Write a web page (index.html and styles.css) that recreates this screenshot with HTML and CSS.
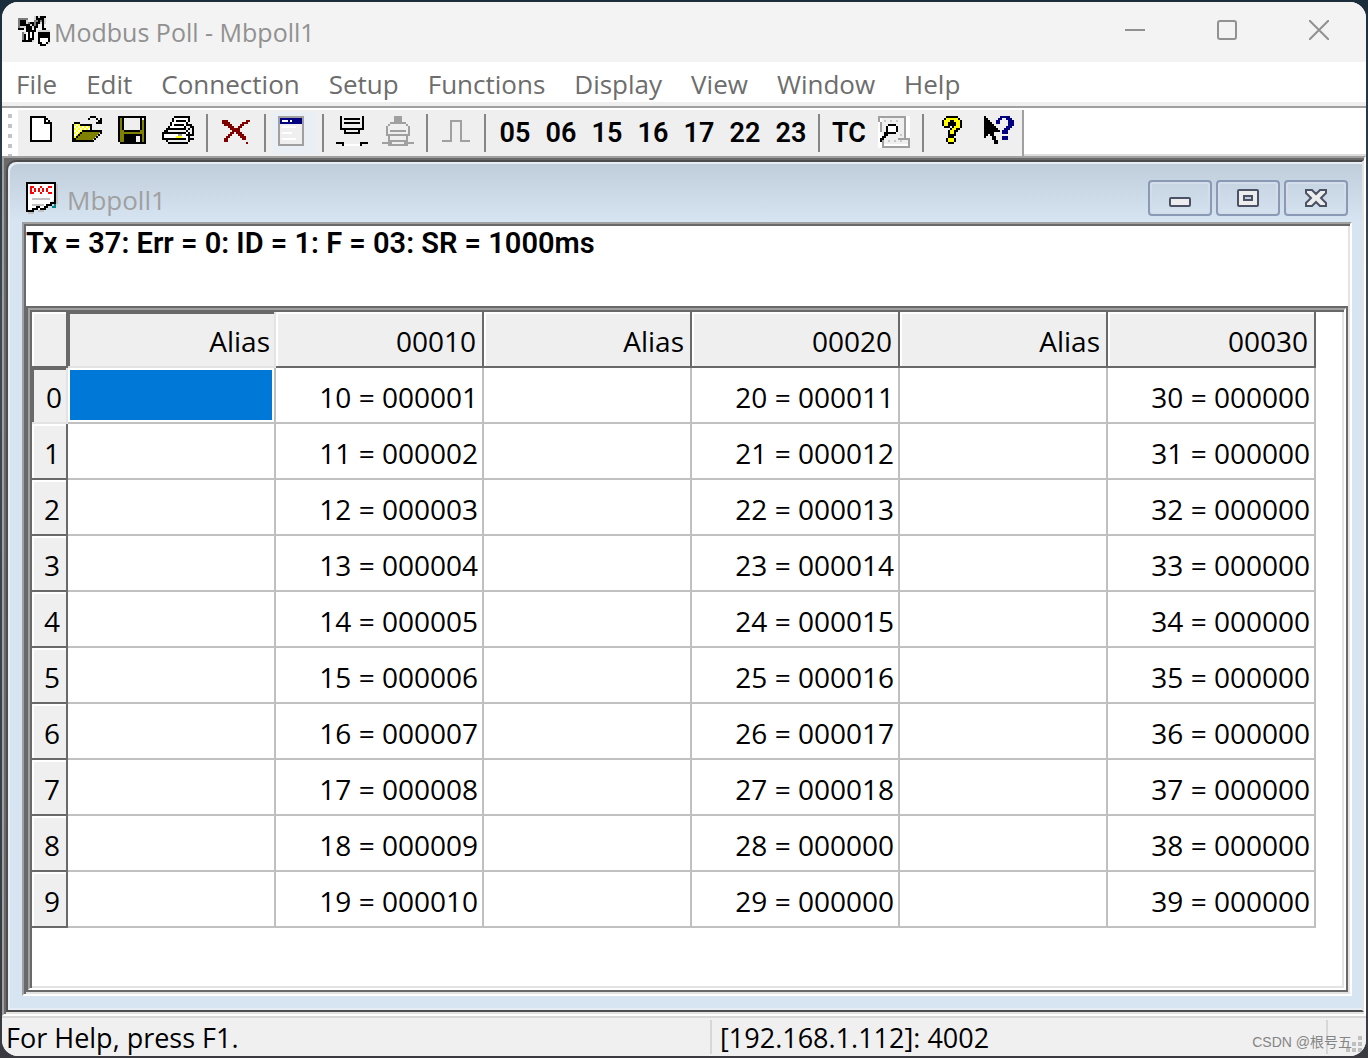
FILE: index.html
```html
<!DOCTYPE html>
<html lang="en">
<head>
<meta charset="utf-8">
<title>Modbus Poll - Mbpoll1</title>
<link rel="stylesheet" href="styles.css">
</head>
<body>
<div class="app">
  <header class="titlebar">
    <svg class="app-icon" viewBox="0 0 16 16" aria-hidden="true">
      <path class="soft" d="M0 1H5V6H0ZM5 3H8V6H5ZM8 0H14V4H8ZM2 8H8V13H2ZM10 7H16V14H10Z"/>
      <path class="mid" d="M0 1H5V2H0ZM0 2H1V6H0ZM5 3H7V4H5ZM8 2H10V5H8ZM10 1H12V3H10ZM8 5H9V8H8ZM2 8H3V12H2Z"/>
      <path class="k" d="M1 2H4V5H1ZM0 6H3V7H0ZM4 4H6V5H7V7H8V12H7V13H2V12H3V9H4ZM6 3H8V5H7V4H6ZM9 0H10V2H9ZM11 0H14V1H13V6H14V7H12V2H11V4H10V6H9V8H8V5H9V3H10V1H11ZM10 8H16V13H15V14H14V15H11V14H10Z"/>
      <path class="w" d="M4 8H5V12H4ZM6 8H7V11H6ZM11 11H15V13H14V14H12V13H11Z"/>
    </svg>
    <h1 class="app-title">Modbus Poll - Mbpoll1</h1>
    <div class="caption-buttons">
      <button type="button" aria-label="Minimize"><svg viewBox="0 0 20 20"><path d="M0 10H20"/></svg></button>
      <button type="button" aria-label="Maximize"><svg viewBox="0 0 20 20"><rect x="1" y="1" width="18" height="18" rx="2"/></svg></button>
      <button type="button" aria-label="Close"><svg viewBox="0 0 20 20"><path d="M0 0L20 20M20 0L0 20"/></svg></button>
    </div>
  </header>

  <nav class="menu" aria-label="Main menu">
    <button type="button">File</button>
    <button type="button">Edit</button>
    <button type="button">Connection</button>
    <button type="button">Setup</button>
    <button type="button">Functions</button>
    <button type="button">Display</button>
    <button type="button">View</button>
    <button type="button">Window</button>
    <button type="button">Help</button>
  </nav>

  <div class="rebar">
    <div class="grip"></div>
    <div class="toolbar" role="toolbar" aria-label="Standard">
      <button type="button" aria-label="New"><svg viewBox="0 0 16 16"><path class="w" d="M2.5 .5H9.5L12.5 3.5V12.5H2.5Z"/><path class="ln" d="M2 .5H10M2.5 0V13M2 12.5H13M12.5 3V13M9.5 0V4M9 3.5H13M10 1.5H11M11 2.5H12"/></svg></button>
      <button type="button" aria-label="Open"><svg viewBox="0 0 16 16">
        <path fill="#fff" d="M1 4H10V7H4L1 12Z"/>
        <path stroke="#ff0" stroke-dasharray="1 1" d="M1 4.5H4M2 5.5H10M1 6.5H10M2 7.5H5M1 8.5H4M2 9.5H3M1 10.5H2"/>
        <path fill="#808000" d="M5 8H14L10 12H1L3 9Z"/>
        <path class="ln" d="M8 1.5H9M9 .5H12M12 1.5H13M13 2.5H15M12 3.5H15M14.5 1V4M1 3.5H4M.5 4V13M4 4.5H10M9.5 4V8M5 7.5H15M4 8.5H5M3 9.5H4M2 10.5H3M1 11.5H2M1 12.5H11M11 11.5H12M12 10.5H13M13 9.5H14M14 8.5H15"/></svg></button>
      <button type="button" aria-label="Save"><svg viewBox="0 0 16 16">
        <path class="k" d="M0 0H14V14H1V13H0Z"/><path fill="#808000" d="M1 1H13V13H1Z"/>
        <path class="k" d="M2 0H12V7H11V8H3V7H2ZM3 9H12V14H3Z"/><path fill="#efefef" d="M3 1H11V7H3ZM9 10H11V13H9ZM12 1H13V2H12Z"/></svg></button>
      <button type="button" aria-label="Print"><svg viewBox="0 0 16 16">
        <path class="w" d="M5 1H12L10 7H2ZM0 8H13V12H0Z"/>
        <path class="ln" d="M5 .5H13M4.500 1V3M3.500 3V5M2.500 5V7M12.500 1V3M11.500 3V5M10.500 5V7M6 2.500H11M5 4.500H10M1 6.500H10M0 7.500H2M-.5 8V12M0 8.500H11M11 7.500H12M12 6.500H13M13 5.500H15M12 4.500H14M14.500 5V10M12.500 8V13M0 11.500H11M1 12.500H2M2 13.500H12M11 9.500H14M13 11.500H15M12 12.500H13"/>
        <path fill="#ff0" d="M6 10H9V11H6Z"/><path fill="#999" d="M7 9H9V10H7Z"/></svg></button>
      <span class="sep"></span>
      <button type="button" aria-label="Delete"><svg viewBox="0 0 16 16"><path fill="#800000" d="M0 2H3V3H4V4H5V5H6V6H8V5H9V4H10V3H12V2H14V3H13V4H11V5H10V6H9V8H10V9H11V10H12V12H10V11H9V10H8V9H7V8H6V9H5V10H4V11H3V13H1V11H2V10H3V9H4V8H5V7H4V6H3V5H1V4H0ZM12 13H13V14H12Z"/></svg></button>
      <span class="sep"></span>
      <button type="button" class="hot" aria-label="Read/write definition"><svg viewBox="0 0 16 16">
        <path fill="#a0a0a0" d="M-1 0H12V15H-1Z"/><path fill="#efefef" d="M0 1H11V14H0Z"/><path fill="#000080" d="M0 1H11V4H0Z"/>
        <path class="w" d="M1 2H4V3H1ZM5 2H6V3H5ZM1 5H8V6H1ZM1 8H6V9H1ZM1 11H8V12H1Z"/></svg></button>
      <span class="sep"></span>
      <button type="button" aria-label="Connect"><svg viewBox="0 0 16 16"><path class="w" d="M3 14H11V15H3Z"/><path class="ln" d="M1.500 0V6M12.500 0V6M3 1.500H11M3 3.500H11M1 6.500H13M3.500 7V9M10.500 7V9M3 8.500H11M-1 13.500H3M2.500 13V15M11 13.500H15M11.500 13V15"/></svg></button>
      <button type="button" aria-label="Disconnect"><svg viewBox="0 0 16 16"><path fill="#a0a0a0" d="M5 0H9V3H11V4H12V5H13V10H12V13H15V14H12V15H2V14H-1V13H2V10H1V5H2V4H3V3H5Z"/><path fill="#efefef" d="M3 4H11V5H12V9H11V12H10V13H4V12H3V9H2V5H3Z"/><path fill="#a0a0a0" d="M3 7H11V8H3ZM3 9H11V10H3ZM3 12H11V13H3Z"/><path fill="#efefef" d="M4 13H10V14H4Z"/></svg></button>
      <span class="sep"></span>
      <button type="button" aria-label="Pulse"><svg viewBox="0 0 16 16"><path fill="none" stroke="#a0a0a0" d="M0 12.500H4.500V2.500H9.500V12.500H14"/></svg></button>
      <span class="sep"></span>
      <button type="button" class="num">05</button>
      <button type="button" class="num">06</button>
      <button type="button" class="num">15</button>
      <button type="button" class="num">16</button>
      <button type="button" class="num">17</button>
      <button type="button" class="num">22</button>
      <button type="button" class="num">23</button>
      <span class="sep"></span>
      <button type="button" class="num">TC</button>
      <button type="button" aria-label="Communication traffic"><svg viewBox="0 0 16 16">
        <path class="w" d="M-1 0H15V16H-1Z"/><path fill="#efefef" d="M1 1H12V11H14V14H2V12H1Z"/>
        <path fill="none" stroke="#a0a0a0" d="M-1 .5H13M-.5 0V3M.5 3V8M12.500 0V12M9 11.500H15M14.500 11V15M1 15.500H15M1.500 12V16"/>
        <path fill="none" stroke="#c8c8c8" stroke-dasharray="1 2" d="M2 2.500H11M10 9.500H12M4 12.500H12"/>
        <path class="k" d="M4 4H8V5H4ZM3 5H4V8H3ZM8 5H9V8H8ZM4 8H8V9H4ZM2 8H4V10H3V11H2V12H1V13H0V11H1V10H2Z"/><path class="w" d="M4 5H8V8H4Z"/></svg></button>
      <span class="sep"></span>
      <button type="button" aria-label="About"><svg viewBox="0 0 16 16">
        <path class="k" d="M4 0H10V1H11V2H12V6H11V7H10V8H9V10H8V11H9V13H8V14H5V13H4V11H5V7H6V6H7V5H6V6H3V5H2V2H3V1H4Z"/>
        <path fill="#ff0" d="M4 1H10V2H11V6H9V7H8V9H6V7H7V6H8V5H9V3H8V2H6V3H5V5H3V2H4ZM5 11H8V13H5Z"/></svg></button>
      <button type="button" aria-label="Context help"><svg viewBox="0 0 16 16">
        <path class="k" d="M0 0H1V1H2V2H3V3H4V4H5V5H6V6H7V7H8V8H5V10H6V12H7V14H5V12H4V10H3V9H2V10H1V11H0Z"/>
        <path fill="#000080" d="M8 0H13V1H14V2H15V5H14V6H13V7H12V9H9V7H10V6H11V5H12V2H11V1H9V2H8V4H6V2H7V1H8ZM9 10H12V12H9Z"/></svg></button>
    </div>
    <div class="rebar-rest"></div>
  </div>

  <main class="mdi">
    <section class="child">
      <header class="child-title">
        <svg class="doc-icon" viewBox="0 0 16 16" aria-hidden="true">
          <path fill="#c0c0c0" d="M15 1H16V11H15ZM1 15H4V16H1ZM6 14H9V15H6Z"/>
          <path class="w" d="M1 1H14V9L8 14H1Z"/>
          <path class="ln" d="M0 .5H15M.5 0V15M14.500 0V10M13 10.500H15M12.500 10V12M10 11.500H13M10.500 11V13M9 12.500H11M7 13.500H10M5 12.500H7M4 13.500H6M1 14.500H4M3 13.500H5"/>
          <path fill="#f00" d="M2 2H4V3H5V5H4V6H2ZM7 2H8V3H9V5H8V6H7V5H6V3H7ZM11 2H13V3H11V5H13V6H11V5H10V3H11Z"/>
          <path class="w" d="M3 3H4V5H3ZM7 3H8V5H7Z"/>
          <path fill="#c0c0c0" d="M3 8H12V9H3ZM3 11H9V12H3Z"/><path fill="#008080" d="M14 11H15V13H13V12H14Z"/>
        </svg>
        <h2>Mbpoll1</h2>
        <div class="child-buttons">
          <button type="button" aria-label="Minimize document"><svg viewBox="0 0 24 20"><rect class="gl" x="2" y="10" width="20" height="8" rx="1"/></svg></button>
          <button type="button" aria-label="Restore document"><svg viewBox="0 0 24 20"><rect class="gl" x="2" y="2" width="20" height="16" rx="1"/><rect class="gl hole" x="8" y="8" width="8" height="4"/></svg></button>
          <button type="button" aria-label="Close document"><svg viewBox="0 0 24 20"><path class="gl" d="M2 2H8L12 6L16 2H22V5L17 10L22 15V18H16L12 14L8 18H2V15L7 10L2 5Z"/></svg></button>
        </div>
      </header>
      <div class="client">
        <p class="poll-status">Tx = 37: Err = 0: ID = 1: F = 03: SR = 1000ms</p>
        <div class="grid-frame"><div class="grid-inner">
          <table class="grid">
            <thead>
              <tr><th class="corner"></th><th class="active" scope="col">Alias</th><th scope="col">00010</th><th scope="col">Alias</th><th scope="col">00020</th><th scope="col">Alias</th><th scope="col">00030</th></tr>
            </thead>
            <tbody>
              <tr><th class="active" scope="row">0</th><td class="selected"></td><td>10 = 000001</td><td></td><td>20 = 000011</td><td></td><td>30 = 000000</td></tr>
              <tr><th scope="row">1</th><td></td><td>11 = 000002</td><td></td><td>21 = 000012</td><td></td><td>31 = 000000</td></tr>
              <tr><th scope="row">2</th><td></td><td>12 = 000003</td><td></td><td>22 = 000013</td><td></td><td>32 = 000000</td></tr>
              <tr><th scope="row">3</th><td></td><td>13 = 000004</td><td></td><td>23 = 000014</td><td></td><td>33 = 000000</td></tr>
              <tr><th scope="row">4</th><td></td><td>14 = 000005</td><td></td><td>24 = 000015</td><td></td><td>34 = 000000</td></tr>
              <tr><th scope="row">5</th><td></td><td>15 = 000006</td><td></td><td>25 = 000016</td><td></td><td>35 = 000000</td></tr>
              <tr><th scope="row">6</th><td></td><td>16 = 000007</td><td></td><td>26 = 000017</td><td></td><td>36 = 000000</td></tr>
              <tr><th scope="row">7</th><td></td><td>17 = 000008</td><td></td><td>27 = 000018</td><td></td><td>37 = 000000</td></tr>
              <tr><th scope="row">8</th><td></td><td>18 = 000009</td><td></td><td>28 = 000000</td><td></td><td>38 = 000000</td></tr>
              <tr><th scope="row">9</th><td></td><td>19 = 000010</td><td></td><td>29 = 000000</td><td></td><td>39 = 000000</td></tr>
            </tbody>
          </table>
        </div></div>
      </div>
    </section>
  </main>

  <footer class="statusbar">
    <span class="pane help">For Help, press F1.</span>
    <span class="pane conn">[192.168.1.112]: 4002</span>
    <span class="pane last"></span>
    <svg class="size-grip" viewBox="0 0 16 16" aria-hidden="true"><path d="M12 0h4v4h-4zM6 6h4v4H6zM12 6h4v4h-4zM0 12h4v4H0zM6 12h4v4H6zM12 12h4v4h-4z"/></svg>
    <span class="watermark">CSDN @根号五</span>
  </footer>
</div>
</body>
</html>
```
FILE: styles.css
```css
* { box-sizing: border-box; }

body {
  margin: 0;
  min-height: 100vh;
  padding: 2px;
  display: flex;
  background: linear-gradient(180deg, #1b2c3b, #3d4a55 30%, #34404b 75%, #3a3a40);
  font-family: "Open Sans", "Noto Sans", sans-serif;
  font-size: 28px;
  color: #000;
}

h1, h2, p { margin: 0; font-weight: 400; }

button {
  margin: 0;
  padding: 0;
  border: 0;
  background: none;
  font: inherit;
  color: inherit;
}

.app {
  flex: 1;
  min-width: 0;
  display: flex;
  flex-direction: column;
  border-radius: 16px;
  overflow: hidden;
  background: #f0f0f0;
}

/* Title bar */
.titlebar {
  height: 60px;
  display: flex;
  align-items: center;
  padding-left: 16px;
  background: #f3f3f3;
  color: #919191;
}
.app-icon { width: 32px; height: 32px; margin-right: 4px; }
.app-title { flex: 1; font-size: 25px; line-height: 60px; }
.caption-buttons { display: flex; padding: 0 1px 4px 0; }
.caption-buttons button { width: 92px; height: 56px; display: grid; place-items: center; }
.caption-buttons svg { width: 20px; height: 20px; fill: none; stroke: #919191; stroke-width: 2; }

/* Menu */
.menu {
  height: 44px;
  display: flex;
  gap: 29px;
  padding-left: 14px;
  background: #fff;
  border-bottom: 4px solid #efefef;
  color: #6d6d6d;
}
.menu button { font-size: 26px; line-height: 40px; padding-top: 2px; height: 40px; }

/* Toolbar */
.rebar { display: flex; height: 50px; border-top: 2px solid #a0a0a0; background: #fff; }
.grip {
  width: 16px;
  background: linear-gradient(#c4c4c4, #c4c4c4) 6px 6px / 4px 4px no-repeat,
    linear-gradient(#c4c4c4, #c4c4c4) 6px 16px / 4px 4px no-repeat,
    linear-gradient(#c4c4c4, #c4c4c4) 6px 26px / 4px 4px no-repeat,
    linear-gradient(#c4c4c4, #c4c4c4) 6px 36px / 4px 4px no-repeat,
    linear-gradient(#c4c4c4, #c4c4c4) 6px 46px / 4px 2px no-repeat;
}
.toolbar {
  display: flex;
  margin-top: 2px;
  background: #efefef;
  border-right: 2px solid #a0a0a0;
}
.toolbar button { width: 46px; height: 46px; padding: 6px 6px 8px 8px; }
.toolbar button.num { padding: 0; font: 600 27px/44px Roboto, "Liberation Sans", sans-serif; }
.toolbar button.hot { background: linear-gradient(#e9eff4, #e9eff4) center / 44px 42px no-repeat; border-radius: 6px; }
.toolbar svg { display: block; width: 32px; height: 32px; overflow: visible; shape-rendering: crispEdges; }
.sep { width: 12px; height: 38px; margin-top: 4px; background: linear-gradient(#868686, #868686) 4px 0 / 2px 100% no-repeat; }
.rebar-rest { flex: 1; border-bottom: 2px solid #ddd; }

.k { fill: #000; }
.w { fill: #fff; }
.soft { fill: #d4d4d4; }
.mid { fill: #7d7d7d; }
.ln { fill: none; stroke: #000; }

/* MDI area */
.mdi {
  flex: 1;
  display: flex;
  padding: 2px 0 0 2px;
  background: #696969;
  border: 2px solid #a0a0a0;
  border-right-color: #fff;
  border-bottom-color: #fff;
}
.child {
  flex: 1;
  min-width: 0;
  display: flex;
  flex-direction: column;
  padding: 0 10px 14px 14px;
  border: 2px solid #4d4d4d;
  border-right-color: #e3e3e3;
  box-shadow: inset 2px 2px #e6edf5, inset 0 -2px #e6edf5, 0 2px #e3e3e3;
  margin-bottom: 2px;
  background: linear-gradient(#bfcddb, #d7e4f2 60px) #d7e4f2;
  border-top-left-radius: 10px;
}
.child-title { height: 60px; display: flex; align-items: center; padding-left: 4px; color: #a0a0a0; }
.doc-icon { width: 32px; height: 32px; margin: 12px 9px 0 0; shape-rendering: crispEdges; }
.app-icon { shape-rendering: crispEdges; }
.child-title h2 { flex: 1; font-size: 26px; line-height: 36px; padding-top: 16px; }
.child-buttons { display: flex; gap: 4px; padding: 12px 4px 0 0; }
.child-buttons button {
  width: 64px;
  height: 36px;
  display: grid;
  place-items: center;
  border: 2px solid #8a99b5;
  border-radius: 4px;
  box-shadow: inset 0 0 0 2px #d3deea;
}
.child-buttons svg { width: 24px; height: 20px; }
.gl { fill: #ededed; stroke: #4c5266; stroke-width: 2; }
.hole { fill: #c3d0df; }

.client {
  flex: 1;
  display: flex;
  flex-direction: column;
  background: #fff;
  border: 2px solid #a0a0a0;
  border-right-color: #fff;
  border-bottom-color: #fff;
  box-shadow: inset 2px 2px #696969, inset -2px -2px #e3e3e3;
  padding: 2px;
}
.poll-status { height: 80px; font: 600 29px/34px Roboto, "Liberation Sans", sans-serif; }
.grid-frame {
  flex: 1;
  display: flex;
  border: 2px solid #696969;
}
.grid-inner {
  flex: 1;
  padding: 2px;
  border: 2px solid #a0a0a0;
  border-right-color: #fff;
  border-bottom-color: #fff;
  box-shadow: inset 2px 2px #696969, inset -2px -2px #e3e3e3;
}

/* Register grid */
.grid { table-layout: fixed; width: 1284px; border-collapse: separate; border-spacing: 0; }
.grid th, .grid td {
  width: 208px;
  height: 56px;
  padding: 4px 4px 0 0;
  border: 0 solid #c0c0c0;
  border-width: 0 2px 2px 0;
  text-align: right;
  font-weight: 400;
  line-height: 36px;
  white-space: nowrap;
}
.grid th {
  padding-right: 6px;
  background: #efefef;
  border-color: #696969;
  box-shadow: inset 2px 2px #fff;
}
.grid th:first-child { width: 36px; }
.grid th.active { padding-right: 4px; border-color: #e3e3e3; box-shadow: inset 2px 2px #696969; }
.grid td.selected { background: #0078d7; box-shadow: inset 2px 2px #fff, inset -2px -2px #fff; }

/* Status bar */
.statusbar {
  position: relative;
  display: flex;
  height: 40px;
  border-top: 2px solid #d7d7d7;
  background: #f0f0f0;
  line-height: 38px;
}
.pane { margin: 2px 0; line-height: 36px; font-size: 27px; }
.help { flex: 1; padding-left: 4px; }
.conn { width: 616px; border-left: 2px solid #d7d7d7; padding-left: 8px; }
.last { width: 40px; border-left: 2px solid #d7d7d7; }
.size-grip { position: absolute; right: 4px; bottom: 4px; width: 16px; height: 16px; fill: #bfbfbf; }
.watermark {
  position: absolute;
  right: 14px;
  bottom: 4px;
  font: 14px/20px "Liberation Sans", "Noto Sans CJK SC", sans-serif;
  color: #858585;
}
```
